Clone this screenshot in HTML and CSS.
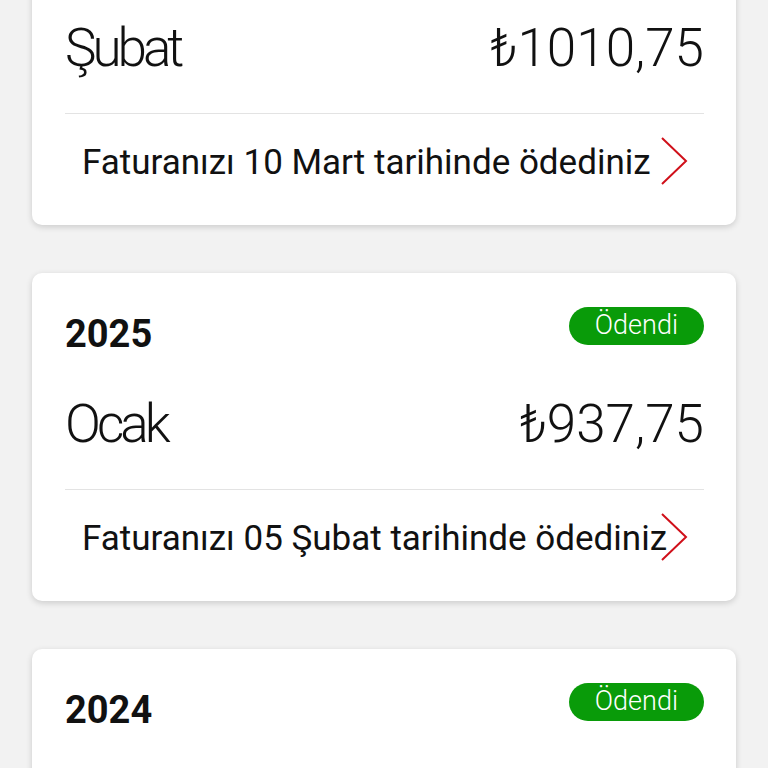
FILE: index.html
```html
<!DOCTYPE html>
<html lang="tr">
<head>
  <meta charset="UTF-8" />
  <meta name="viewport" content="width=device-width, initial-scale=1.0"/>
  <title>Fatura Geçmişi</title>
  <link rel="stylesheet" href="styles.css">
</head>
<body>
  <div class="bill-list">

    <div class="bill">
      <div class="bill-head">
        <span class="year">2025</span>
        <span class="status">Ödendi</span>
      </div>
      <div class="bill-amount">
        <span class="month">Şubat</span>
        <span class="total">₺1010,75</span>
      </div>
      <div class="divider"></div>
      <a class="bill-link" href="#">
        Faturanızı 10 Mart tarihinde ödediniz
        <svg class="chevron" viewBox="0 0 28 48" width="28" height="48"><polyline points="2,1 26,24 2,47" /></svg>
      </a>
    </div>

    <div class="bill">
      <div class="bill-head">
        <span class="year">2025</span>
        <span class="status">Ödendi</span>
      </div>
      <div class="bill-amount">
        <span class="month">Ocak</span>
        <span class="total">₺937,75</span>
      </div>
      <div class="divider"></div>
      <a class="bill-link" href="#">
        Faturanızı 05 Şubat tarihinde ödediniz
        <svg class="chevron" viewBox="0 0 28 48" width="28" height="48"><polyline points="2,1 26,24 2,47" /></svg>
      </a>
    </div>

    <div class="bill">
      <div class="bill-head">
        <span class="year">2024</span>
        <span class="status">Ödendi</span>
      </div>
      <div class="bill-amount">
        <span class="month">Aralık</span>
        <span class="total">₺912,40</span>
      </div>
      <div class="divider"></div>
      <a class="bill-link" href="#">
        Faturanızı 07 Ocak tarihinde ödediniz
        <svg class="chevron" viewBox="0 0 28 48" width="28" height="48"><polyline points="2,1 26,24 2,47" /></svg>
      </a>
    </div>

  </div>
</body>
</html>
```

FILE: styles.css
```css
body {
  margin: 0;
  padding: 0;
  background: #f2f2f2;
  font-family: Roboto, 'Liberation Sans', sans-serif;
  color: #111;
  overflow: hidden;
}

/* list is scrolled: first card starts above the viewport */
.bill-list {
  display: flex;
  flex-direction: column;
  gap: 48px;
  margin-top: -103px;
  padding: 0 32px;
}

.bill {
  background: #fff;
  border-radius: 10px;
  box-shadow: 0 2px 6px rgba(0,0,0,0.16);
  padding: 33px 32px 38px 33px;
}

.bill-head {
  display: flex;
  justify-content: space-between;
  align-items: flex-start;
}

.year {
  font-size: 38px;
  font-weight: 700;
  line-height: 40px;
  margin-top: 8px;
}

.status {
  background: #099b09;
  color: #fff;
  font-size: 27px;
  font-weight: 300;
  height: 38px;
  line-height: 37px;
  padding: 0 26px;
  border-radius: 19px;
  margin-top: 1px;
}

.bill-amount {
  display: flex;
  justify-content: space-between;
  margin-top: 40px;
  font-size: 53px;
  font-weight: 300;
  line-height: 60px;
}

.month {
  letter-spacing: -4px;
}

.divider {
  height: 1px;
  background: #e3e3e3;
  margin-top: 35px;
}

.bill-link {
  display: block;
  position: relative;
  margin-top: 25px;
  padding-left: 17px;
  font-size: 35px;
  line-height: 48px;
  color: #111;
  text-decoration: none;
  white-space: nowrap;
}

.chevron {
  position: absolute;
  right: 16px;
  top: -2px;
  fill: none;
  stroke: #d0101a;
  stroke-width: 2;
}
```
